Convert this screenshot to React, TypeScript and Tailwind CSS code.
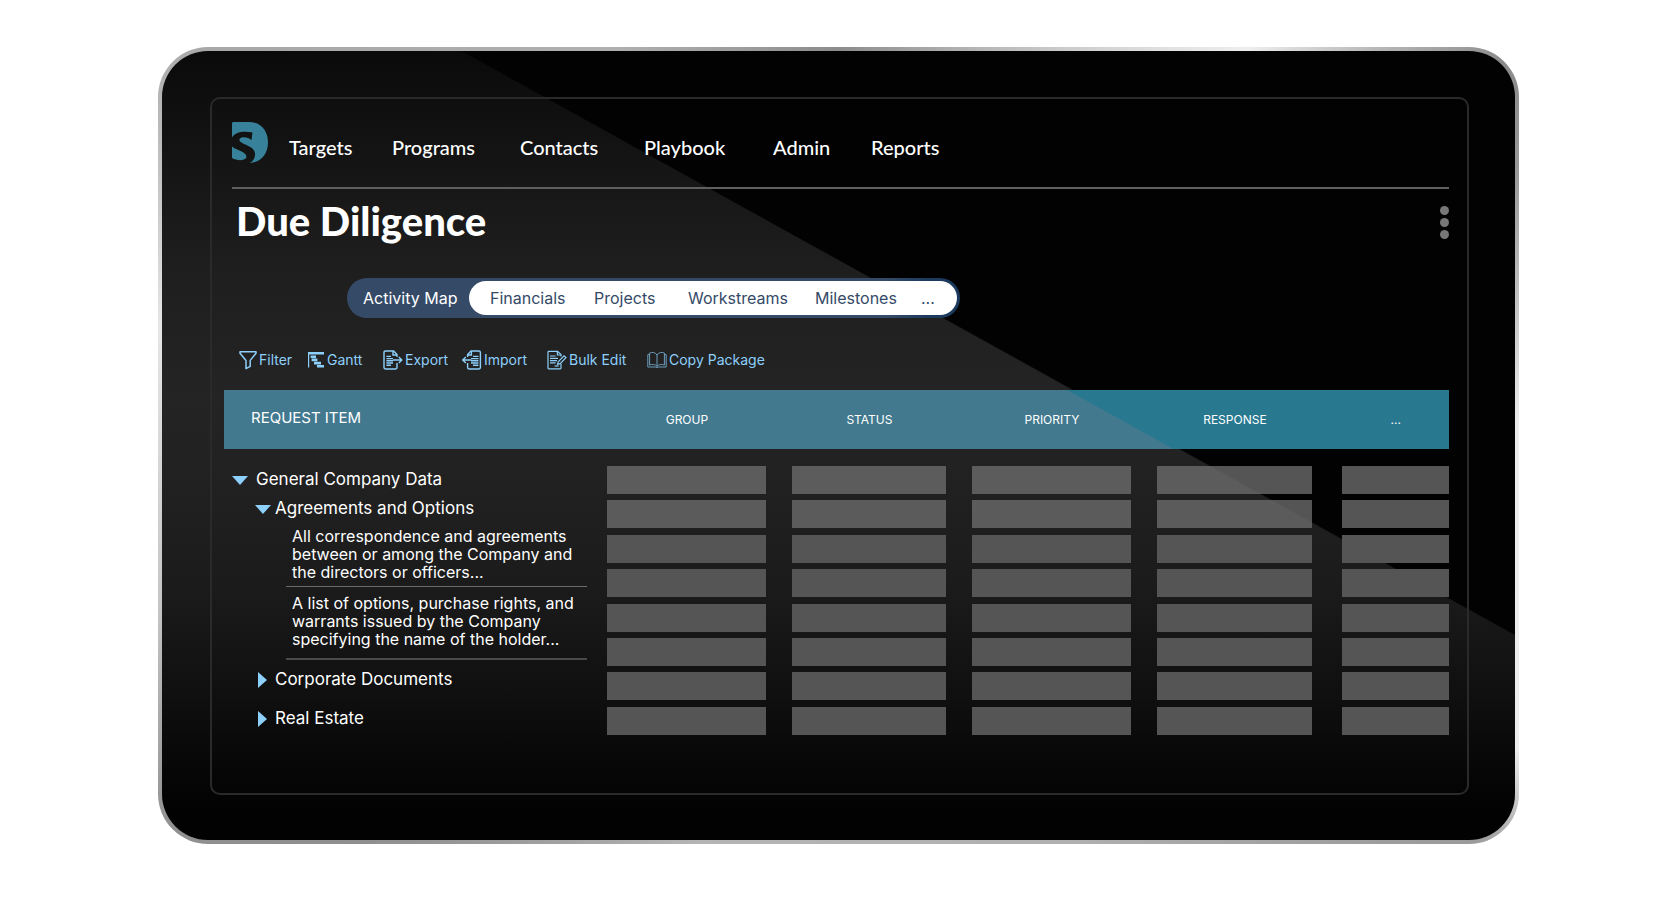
import React from "react";

const navItems = ["Targets", "Programs", "Contacts", "Playbook", "Admin", "Reports"];

const columns = [
  { label: "GROUP", space: "pr-[26px]" },
  { label: "STATUS", space: "pr-[26px]" },
  { label: "PRIORITY", space: "pr-[26px]" },
  { label: "RESPONSE", space: "pr-[30px]" },
  { label: "...", space: "pr-0" },
];

const rows = [0, 1, 2, 3, 4, 5, 6, 7];

function Logo() {
  return (
    <svg viewBox="0 0 36 41" className="w-9 h-[41px]" aria-hidden="true">
      <defs>
        <mask id="logo-cut">
          <rect width="36" height="41" fill="#fff" />
          <path
            d="M20.5 10.6 L19.4 18.2 C17 15.6 10.4 14.2 8 16.6 C6.4 18.6 8.6 20.6 12 22 C19 24.8 23.8 27.6 23 33.4 C22.4 37 20.8 39.4 17.6 41 L0 41 V36 C4 38.4 10.5 39 13.4 36.8 C16 34.4 13.6 31.4 9.6 29.4 C5 27.2 1.4 26.4 0 24.2 V15.4 C3 10.2 11 8.4 20.5 10.6 Z"
            fill="#000"
          />
        </mask>
      </defs>
      <path
        d="M0 1.4 Q0 0 1.4 0 H17 C29 0 36 9 36 20.6 C36 32 28.6 41 17.4 41 H0 Z"
        fill="#37829a"
        mask="url(#logo-cut)"
      />
    </svg>
  );
}

function FilterIcon() {
  return (
    <svg viewBox="0 0 18 20" className="w-[18px] h-5" fill="none" stroke="#8dd0fb" strokeWidth="1.5" strokeLinejoin="round">
      <path d="M1 1.8 H17 V3.2 L11.2 10.4 V16.4 L7 18.6 V10.4 L1 3.2 Z" />
    </svg>
  );
}

function GanttIcon() {
  return (
    <svg viewBox="0 0 18 20" className="w-[18px] h-5" fill="#8dd0fb">
      <path d="M1 2 H17 V4.4 H1 Z M1 4 H2.2 V17.4 H1 Z M3.6 5.4 H9 V8 H3.6 Z M4.6 8.6 H10.4 V11.2 H4.6 Z M7 11.8 H14 V14.4 H7 Z M10 15 H17 V17.6 H10 Z" />
    </svg>
  );
}

function ExportIcon() {
  return (
    <svg viewBox="0 0 20 20" className="w-5 h-5" fill="none" stroke="#8dd0fb" strokeWidth="1.4">
      <path d="M14 7 V4.6 L10.6 1 H2.4 Q1 1 1 2.4 V17.6 Q1 19 2.4 19 H12.6 Q14 19 14 17.6 V13" />
      <path d="M10 1.2 V5 H14" />
      <path d="M3.4 6.4 H8 M3.4 8.6 H10 M3.4 10.8 H10 M3.4 13 H10 M3.4 15.2 H8" />
      <path d="M10 10 H18.6 M15.8 7 L18.8 10 L15.8 13" />
    </svg>
  );
}

function ImportIcon() {
  return (
    <svg viewBox="0 0 20 20" className="w-5 h-5" fill="none" stroke="#8dd0fb" strokeWidth="1.4">
      <path d="M5.6 7 V4.6 L9 1 H17 Q18.4 1 18.4 2.4 V17.6 Q18.4 19 17 19 H7 Q5.6 19 5.6 17.6 V13" />
      <path d="M9.4 1.2 V5 H5.6" />
      <path d="M11 6.4 H16.4 M9 8.6 H16.4 M9 10.8 H16.4 M9 13 H16.4 M11 15.2 H16.4" />
      <path d="M9.4 10 H1 M3.8 7 L0.8 10 L3.8 13" />
    </svg>
  );
}

function EditIcon() {
  return (
    <svg viewBox="0 0 20 20" className="w-5 h-5" fill="none" stroke="#8dd0fb" strokeWidth="1.2">
      <path d="M14 6.4 V4.6 L10.6 1.4 H1.8 Q1 1.4 1 2.2 V18 Q1 18.8 1.8 18.8 H13.2 Q14 18.8 14 18 V14" />
      <path d="M10.4 1.4 V5 H14" />
      <path d="M3 6 H8.6 M3 8.4 H11 M3 10.6 H10 M3 12.8 H8.6" />
      <path d="M7.6 16 H11.6" />
      <path d="M10.6 14.4 L11.2 11.8 L17 5.8 L19 7.6 L13.2 13.6 Z" />
    </svg>
  );
}

function BookIcon() {
  return (
    <svg viewBox="0 0 20 20" className="w-5 h-5" fill="none" stroke="#6d9dbb" strokeWidth="1">
      <path d="M10 5 C8.6 2.4 5 1.8 2.6 3 V15 C5 14 8.6 14.4 10 16.4 C11.4 14.4 15 14 17.4 15 V3 C15 1.8 11.4 2.4 10 5 Z" />
      <path d="M10 5 V16.4" />
      <path d="M2.6 4.6 H0.8 V17 H8.4 Q10 18 11.6 17 H19.2 V4.6 H17.4" />
    </svg>
  );
}

const tools = [
  { label: "Filter", icon: <FilterIcon />, width: "w-[68px]" },
  { label: "Gantt", icon: <GanttIcon />, width: "w-[76px]" },
  { label: "Export", icon: <ExportIcon />, width: "w-[79px]" },
  { label: "Import", icon: <ImportIcon />, width: "w-[85px]" },
  { label: "Bulk Edit", icon: <EditIcon />, width: "w-[100px]" },
  { label: "Copy Package", icon: <BookIcon />, width: "" },
];

function Down() {
  return (
    <svg viewBox="0 0 16 9" className="w-4 h-[9px]" fill="#8dd0fb" aria-hidden="true">
      <path d="M0 0 H16 L8 9 Z" />
    </svg>
  );
}

function Right() {
  return (
    <svg viewBox="0 0 9 16" className="w-[9px] h-4" fill="#8dd0fb" aria-hidden="true">
      <path d="M0 0 L9 8 L0 16 Z" />
    </svg>
  );
}

function RequestTree() {
  return (
    <div className="pb-[3px] text-[17px] font-normal text-left whitespace-nowrap">
      <button type="button" aria-expanded="true" className="flex items-center gap-2 h-7 pl-2">
        <Down />
        General Company Data
      </button>
      <button type="button" aria-expanded="true" className="flex items-center gap-1 h-[30px] pl-[31px]">
        <Down />
        Agreements and Options
      </button>
      <div className="ml-[62px] mr-5 text-[16px] leading-[18px]">
        <p className="pt-[3px] pb-[5px] pl-[6px] border-b border-[#6a6a6a]">
          All correspondence and agreements
          <br />
          between or among the Company and
          <br />
          the directors or officers...
        </p>
        <p className="pt-[7px] pb-[10px] pl-[6px] border-b-2 border-[#4a4a4a]">
          A list of options, purchase rights, and
          <br />
          warrants issued by the Company
          <br />
          specifying the name of the holder...
        </p>
      </div>
      <button type="button" aria-expanded="false" className="flex items-center gap-2 h-10 pl-[34px]">
        <Right />
        Corporate Documents
      </button>
      <button type="button" aria-expanded="false" className="flex items-center gap-2 h-[38px] pl-[34px]">
        <Right />
        Real Estate
      </button>
    </div>
  );
}

function RequestTable() {
  return (
    <table className="w-full mt-5 table-fixed border-collapse text-white">
      <colgroup>
        <col className="w-[31.3%]" />
        <col className="w-[15.1%]" />
        <col className="w-[14.7%]" />
        <col className="w-[15.1%]" />
        <col className="w-[15.1%]" />
        <col className="w-[8.7%]" />
      </colgroup>
      <thead>
        <tr className="h-[59px] bg-[#28788f] bg-[linear-gradient(29deg,#42798f_71.3%,#28788f_71.4%)]">
          <th scope="col" className="pl-[27px] pb-[2px] text-left text-[15px] font-normal">
            REQUEST ITEM
          </th>
          {columns.map((column) => (
            <th
              key={column.label}
              scope="col"
              className={`text-center text-[12px] font-normal ${column.space}`}
            >
              {column.label}
            </th>
          ))}
        </tr>
        <tr className="h-[17px]" aria-hidden="true">
          <td colSpan={6} className="p-0" />
        </tr>
      </thead>
      <tbody>
        {rows.map((row) => (
          <tr key={row}>
            {row === 0 && (
              <td rowSpan={8} className="p-0 align-top">
                <RequestTree />
              </td>
            )}
            {columns.map((column) => (
              <td key={column.label} className={`py-0 pl-0 align-top ${column.space}`}>
                <div className={row < 2 ? "h-7 bg-[#6d6d6d]/78" : "h-7 bg-[#555555]"} />
              </td>
            ))}
          </tr>
        ))}
      </tbody>
    </table>
  );
}

export default function App() {
  return (
    <div className="min-h-screen bg-white pt-[47px] pb-14 pl-[158px] pr-[155px] font-['Inter','Open_Sans',sans-serif]">
      <div className="rounded-[50px] p-1 bg-[conic-gradient(#8c8c8c,#eeeeee_46deg,#8a8a8a_60deg,#999999_68deg,#ececec_88deg,#eeeeee_114deg,#9a9a9a_122deg,#b0b0b0_150deg,#b4b4b4_200deg,#8f8f8f_230deg,#909090_240deg,#c4c4c4_256deg,#e6e6e6_280deg,#c0c0c0_293deg,#a8a8a8_302deg,#b0b0b0_330deg,#8c8c8c)]">
        <div className="rounded-[46px] bg-[linear-gradient(29deg,transparent_62%,#020202_62.1%),linear-gradient(to_bottom,#0a0a0a,#1e1e1e_27%,#242424_44%,#222222_52%,#1b1b1b_68%,#0f0f0f_82%,#020202_96%)] pt-[46px] pb-[45px] pl-12 pr-[46px]">
          <div className="rounded-[10px] border-2 border-[#2a2a2a] pt-[23px] pb-[52px] pl-3 pr-[18px]">
            <header className="ml-2 flex items-start gap-[21px] border-b-2 border-[#5f5f5f] pb-6">
              <Logo />
              <nav className="grid grid-cols-[103px_128px_124px_129px_98px_auto] pt-[11px] font-['Lato',sans-serif] text-[20px] leading-7 font-medium text-white">
                {navItems.map((item) => (
                  <a key={item} href="#">
                    {item}
                  </a>
                ))}
              </nav>
            </header>

            <div className="ml-2 flex items-start justify-between pt-3 pl-1">
              <h1 className="font-['Lato',sans-serif] text-[40px] leading-10 font-black text-white">
                Due Diligence
              </h1>
              <button type="button" aria-label="More" className="flex flex-col gap-[3px] pt-[5px]">
                <span className="w-[9px] h-[9px] rounded-full bg-[#777777]" />
                <span className="w-[9px] h-[9px] rounded-full bg-[#777777]" />
                <span className="w-[9px] h-[9px] rounded-full bg-[#777777]" />
              </button>
            </div>

            <div className="ml-[123px] mt-[37px] flex h-10 w-fit rounded-full bg-[linear-gradient(to_right,#344a67_88%,#1c3a5e_95%)] p-[3px] text-[16px]">
              <button type="button" className="w-[119px] pl-[13px] text-left text-white">
                Activity Map
              </button>
              <div className="grid grid-cols-[104px_94px_127px_106px_auto] rounded-full bg-white pl-[21px] pr-[22px] text-left text-[#344a67]">
                <button type="button" className="text-left">Financials</button>
                <button type="button" className="text-left">Projects</button>
                <button type="button" className="text-left">Workstreams</button>
                <button type="button" className="text-left">Milestones</button>
                <button type="button" className="text-left">...</button>
              </div>
            </div>

            <div className="mt-8 ml-[15px] flex text-[14px] leading-5 text-[#8dd0fb]">
              {tools.map((tool) => (
                <button
                  key={tool.label}
                  type="button"
                  className={`flex items-center gap-[2px] whitespace-nowrap ${tool.width}`}
                >
                  {tool.icon}
                  {tool.label}
                </button>
              ))}
            </div>

            <RequestTable />
          </div>
        </div>
      </div>
    </div>
  );
}
